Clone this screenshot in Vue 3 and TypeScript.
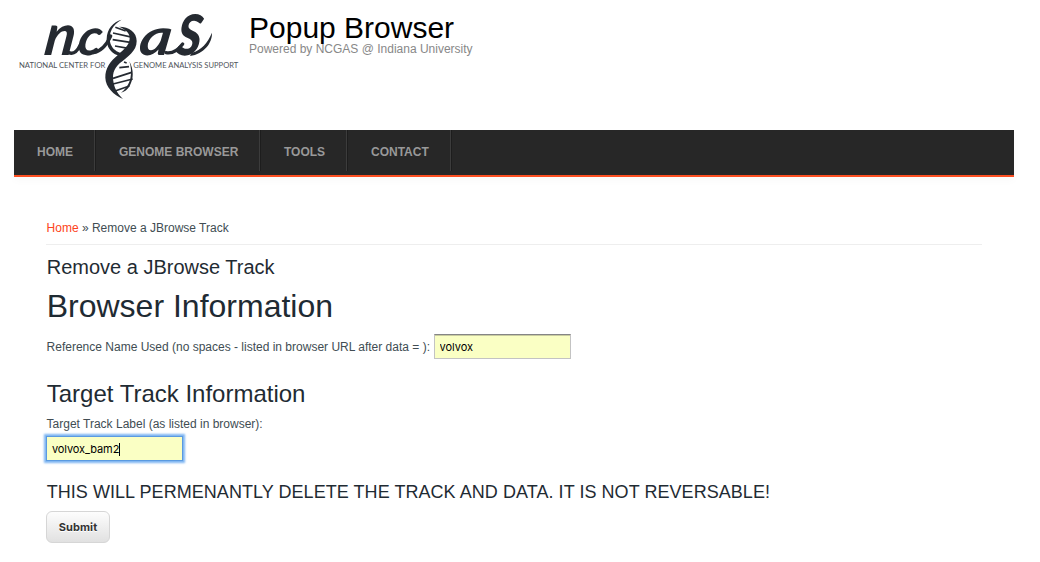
<script setup lang="ts">
import { ref } from 'vue'

interface NavItem {
  label: string
  key: string
}

const navItems: NavItem[] = [
  { label: 'Home', key: 'home' },
  { label: 'Genome Browser', key: 'genome' },
  { label: 'Tools', key: 'tools' },
  { label: 'Contact', key: 'contact' },
]

const referenceName = ref('volvox')
const trackLabel = ref('volvox_bam2')
</script>

<template>
  <div class="page">
    <header class="header">
      <svg class="logo" viewBox="0 0 720 330" width="240" height="110" role="img" aria-label="NCGAS">
        <g class="script">
          <text transform="translate(99 166) skewX(-8)" font-size="172" textLength="92" lengthAdjust="spacingAndGlyphs">n</text>
          <text transform="translate(199 164) skewX(-8)" font-size="154" textLength="72" lengthAdjust="spacingAndGlyphs">c</text>
          <text transform="translate(383 164) skewX(-8)" font-size="154" textLength="96" lengthAdjust="spacingAndGlyphs">a</text>
          <text transform="translate(497 165) skewX(-6)" font-size="236" textLength="76" lengthAdjust="spacingAndGlyphs">s</text>
        </g>
        <g class="swash">
          <path d="M176 158Q196 166 210 136" />
          <path d="M250 158C276 154 291 132 302 108" />
          <path d="M468 158C490 162 506 148 518 132" />
        </g>
        <path class="tail" d="M545 158C575 151 592 129 606 98C607 129 582 162 540 168Z" />
        <g class="rungs">
          <path d="M316 82L347 93M309 99L368 112M308 119L366 128M315 138L355 145" />
          <path d="M309 235L365 217M309 252L368 237M315 273L358 258M328 203L357 200M342 186L350 189" />
        </g>
        <path
          class="strand"
          d="M335 59C308 73 295 99 300 125C304 143 316 153 330 158C349 143 359 130 359 113C358 97 347 89 327 80C358 81 380 96 380 123C380 154 353 170 329 190C310 208 306 225 311 249C315 269 325 283 339 297C310 284 287 261 286 233C285 205 302 183 323 166C301 157 290 141 290 116C291 87 309 66 335 59Z"
        />
        <path class="thin" d="M358 184C372 211 371 236 359 258C352 270 344 275 333 278C346 268 357 253 361 236C365 217 363 200 358 184Z" />
        <g class="tagline">
          <text x="27" y="203" textLength="259" lengthAdjust="spacingAndGlyphs">NATIONAL CENTER FOR</text>
          <text x="370" y="203" textLength="315" lengthAdjust="spacingAndGlyphs">GENOME ANALYSIS SUPPORT</text>
        </g>
      </svg>
      <div class="brand">
        <div class="site-name">Popup Browser</div>
        <div class="slogan">Powered by NCGAS @ Indiana University</div>
      </div>
    </header>

    <nav class="nav">
      <a v-for="item in navItems" :key="item.key" class="nav-item" :class="item.key">{{ item.label }}</a>
    </nav>

    <main class="content">
      <div class="breadcrumb"><a>Home</a> » Remove a JBrowse Track</div>
      <h1 class="page-title">Remove a JBrowse Track</h1>
      <h2 class="section-browser">Browser Information</h2>
      <div class="row">
        <label for="reference">Reference Name Used (no spaces - listed in browser URL after data = ):</label>
        <input id="reference" v-model="referenceName" class="field" type="text" />
      </div>
      <h2 class="section-track">Target Track Information</h2>
      <label class="track-label" for="track">Target Track Label (as listed in browser):</label>
      <div class="field focused">
        <span id="track">{{ trackLabel }}</span><i class="caret"></i>
      </div>
      <h3 class="warning">THIS WILL PERMENANTLY DELETE THE TRACK AND DATA. IT IS NOT REVERSABLE!</h3>
      <button class="submit" type="button">Submit</button>
    </main>
  </div>
</template>

<style>
body {
  margin: 0;
  background: #fff;
  overflow: hidden;
}
</style>

<style scoped>
.page {
  width: 1040px;
  height: 562px;
  overflow: hidden;
  background: #fff;
  color: #414d53;
  font: 12px/18px "Liberation Sans", Arial, sans-serif;
}
.header {
  display: flex;
  height: 130px;
  padding-left: 10px;
}
.logo {
  flex: none;
  overflow: visible;
  fill: #252a31;
}
.script text {
  font-family: Lato, sans-serif;
  font-style: italic;
  font-weight: 700;
}
.tagline text {
  font: 20.5px Lato, sans-serif;
  fill: #50545a;
}
.swash {
  fill: none;
  stroke: #252a31;
  stroke-width: 10;
  stroke-linecap: round;
}
.rungs {
  fill: none;
  stroke: #252a31;
  stroke-width: 5;
}
.brand {
  padding-top: 11px;
  margin-left: -1px;
}
.site-name {
  color: #000;
  font-size: 30px;
  line-height: 34px;
  white-space: nowrap;
}
.slogan {
  margin-top: -5px;
  color: #888;
  line-height: 18px;
  white-space: nowrap;
}
.nav {
  display: flex;
  box-sizing: border-box;
  width: 1000px;
  height: 47px;
  margin-left: 14px;
  background: #272727;
  border-bottom: 2px solid #fd4f21;
  box-shadow: 0 4px 8px rgba(0, 0, 0, 0.025);
}
.nav-item {
  box-sizing: border-box;
  height: 41px;
  padding-left: 24px;
  border-right: 1px solid #3c3c3c;
  box-shadow: 1px 0 #1d1d1d;
  color: #999;
  font-weight: 700;
  line-height: 44px;
  text-transform: uppercase;
  white-space: nowrap;
}
.home {
  width: 81px;
  padding-left: 23px;
}
.genome {
  width: 165px;
}
.tools {
  width: 87px;
}
.contact {
  width: 104px;
}
.content {
  display: flex;
  flex-direction: column;
  align-items: flex-start;
  width: 936px;
  margin-left: 46px;
  padding-top: 42px;
}
.breadcrumb {
  box-sizing: border-box;
  width: 100%;
  height: 26px;
  border-bottom: 1px solid #eee;
  text-indent: 0.6px;
}
.breadcrumb a {
  color: #fd4320;
}
h1,
h2,
h3 {
  margin: 0;
  color: #1f2b33;
  font-weight: 400;
  text-indent: 0.7px;
  white-space: nowrap;
}
.page-title {
  margin-top: 10px;
  font-size: 20px;
  line-height: 24px;
}
.section-browser {
  margin-top: 8px;
  font-size: 32px;
  line-height: 38px;
}
.row {
  display: flex;
  align-items: center;
  margin-top: 8px;
  height: 26px;
}
.row label {
  width: 388px;
  padding-top: 1px;
  text-indent: 0.6px;
  white-space: nowrap;
}
.field {
  box-sizing: border-box;
  width: 137px;
  height: 25px;
  padding: 1px 5px 0;
  border: 1px solid #c3c3c3;
  border-top-color: #858585;
  border-radius: 0;
  outline: none;
  background: #faffc4;
  box-shadow: inset 0 1px #c9cca0;
  color: #000;
  font: 11px Inter, sans-serif;
}
.row .field {
  padding-left: 4.5px;
}
.section-track {
  margin-top: 20px;
  font-size: 24px;
  line-height: 30px;
}
.track-label {
  margin-top: 6px;
  text-indent: 0.6px;
}
.field.focused {
  display: flex;
  align-items: center;
  margin-top: 3px;
  border: 1px solid #5a9ae0;
  box-shadow: 0 0 2px 2px #7db5f2;
  letter-spacing: -0.1px;
}
.caret {
  width: 1px;
  height: 13px;
  background: #000;
}
.warning {
  margin-top: 20px;
  font-size: 18px;
  letter-spacing: 0.05px;
  line-height: 22px;
}
.submit {
  width: 64px;
  height: 32px;
  margin-top: 8px;
  padding: 0;
  border: 1px solid #d6d6d6;
  border-radius: 6px;
  background: linear-gradient(#fdfdfd, #e1e1e1);
  color: #333;
  font: 700 11px Inter, sans-serif;
  letter-spacing: 0.1px;
  text-shadow: 0 1px #fff;
}
</style>
